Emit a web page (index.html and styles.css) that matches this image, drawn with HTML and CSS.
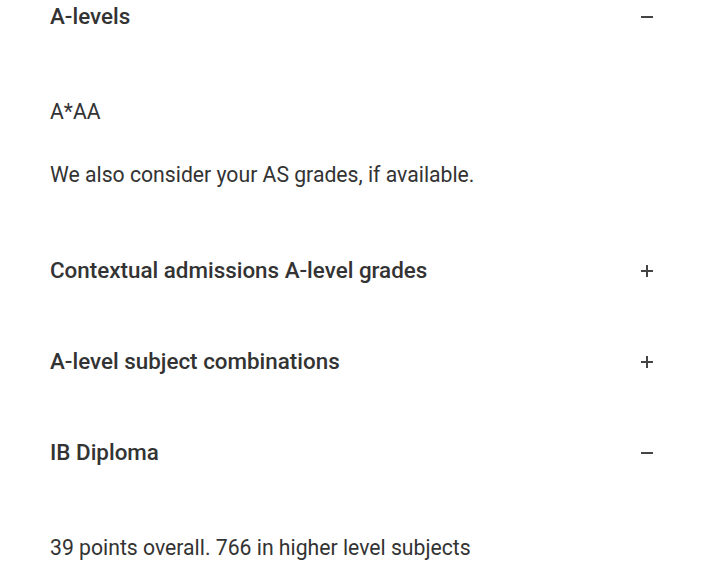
FILE: index.html
```html
<!DOCTYPE html>
<html lang="en">
<head>
<meta charset="utf-8">
<title>Entry requirements</title>
<link rel="stylesheet" href="styles.css">
</head>
<body>
<div class="accordion">
  <section class="item">
    <div class="header"><h3 class="title">A-levels</h3><span class="icon minus"></span></div>
    <div class="content">
      <p>A*AA</p>
      <p>We also consider your AS grades, if available.</p>
    </div>
  </section>
  <section class="item">
    <div class="header"><h3 class="title">Contextual admissions A-level grades</h3><span class="icon plus"></span></div>
  </section>
  <section class="item">
    <div class="header"><h3 class="title">A-level subject combinations</h3><span class="icon plus"></span></div>
  </section>
  <section class="item">
    <div class="header"><h3 class="title">IB Diploma</h3><span class="icon minus"></span></div>
    <div class="content">
      <p>39 points overall. 766 in higher level subjects</p>
    </div>
  </section>
</div>
</body>
</html>
```
FILE: styles.css
```css
html, body {
  margin: 0;
  padding: 0;
  background: #fff;
  overflow: hidden;
}
body {
  font-family: Roboto, "Liberation Sans", sans-serif;
  color: #333;
}
.accordion {
  margin-top: -29px;
  padding: 0 70px 0 50px;
}
.header {
  display: flex;
  align-items: center;
  justify-content: space-between;
  padding: 32px 0;
}
.title {
  margin: 0;
  font-size: 22.4px;
  font-weight: 500;
  line-height: 27px;
  color: #333;
}
.icon {
  position: relative;
  width: 12px;
  height: 12px;
  flex: none;
}
.icon::before, .icon::after {
  content: "";
  position: absolute;
  background: #444;
}
.icon::before {
  left: 0;
  top: 5px;
  width: 12px;
  height: 2px;
}
.plus::after {
  left: 5px;
  top: 0;
  width: 2px;
  height: 12px;
}
.content {
  display: flex;
  flex-direction: column;
  gap: 36px;
  padding: 36px 0 37px;
}
.content p {
  margin: 0;
  font-size: 21.2px;
  line-height: 27px;
  color: #333;
}
```
